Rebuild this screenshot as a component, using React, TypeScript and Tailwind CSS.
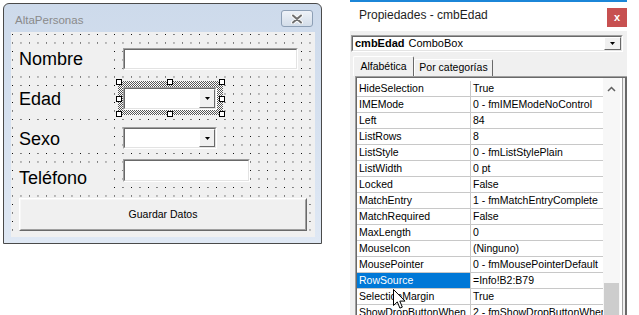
import type { JSX } from 'react'

type PropRow = [string, string]

const propRows: PropRow[] = [
  ['HideSelection', 'True'],
  ['IMEMode', '0 - fmIMEModeNoControl'],
  ['Left', '84'],
  ['ListRows', '8'],
  ['ListStyle', '0 - fmListStylePlain'],
  ['ListWidth', '0 pt'],
  ['Locked', 'False'],
  ['MatchEntry', '1 - fmMatchEntryComplete'],
  ['MatchRequired', 'False'],
  ['MaxLength', '0'],
  ['MouseIcon', '(Ninguno)'],
  ['MousePointer', '0 - fmMousePointerDefault'],
  ['RowSource', '=Info!B2:B79'],
  ['SelectionMargin', 'True'],
  ['ShowDropButtonWhen', '2 - fmShowDropButtonWhenAlways'],
]

const DropButton = ({ className = '' }: { className?: string }): JSX.Element => (
  <div
    className={`flex items-center justify-center border border-white border-r-[#696969] border-b-[#696969] bg-[#f0f0f0] ${className}`}
  >
    <svg width="5" height="3" viewBox="0 0 5 3">
      <path d="M0 0h5L2.5 3z" fill="#000" />
    </svg>
  </div>
)

const Sunken = ({
  className = '',
  children,
}: {
  className?: string
  children?: React.ReactNode
}): JSX.Element => (
  <div className={`flex border border-[#a0a0a0] border-r-white border-b-white ${className}`}>
    <div className="flex flex-1 border border-[#696969] border-r-[#e3e3e3] border-b-[#e3e3e3] bg-white">
      {children}
    </div>
  </div>
)

const FormLabel = ({ text, className = '' }: { text: string; className?: string }): JSX.Element => (
  <div
    className={`flex h-[26px] w-[96px] shrink-0 items-center bg-[#f0f0f0] pl-[4px] text-[18px] leading-[26px] text-black ${className}`}
  >
    {text}
  </div>
)

const Handle = ({ pos }: { pos: string }): JSX.Element => (
  <div className={`absolute h-[6px] w-[6px] border border-black bg-white ${pos}`} />
)

const UserForm = (): JSX.Element => (
  <div className="flex h-[241px] w-[319px] flex-col rounded-t-[6px] border border-[#4a4a4a] bg-linear-to-b from-[#cddaeb] to-[#dfe8f4]">
    <div className="flex h-[28px] shrink-0 items-start">
      <span className="mt-[9px] pl-[11px] text-[11.5px] leading-[14px] text-[#8a8a8a]">AltaPersonas</span>
      <div className="mt-[6px] mr-[8px] ml-auto flex h-[17px] w-[32px] items-center justify-center rounded-[3px] border border-[#8d9fb5] bg-linear-to-b from-[#eef2f8] to-[#d3dde9]">
        <svg width="14" height="10" viewBox="0 0 14 10">
          <path d="M3 1.5l8 7M11 1.5l-8 7" stroke="#fafafa" strokeWidth="4" strokeLinecap="round" />
          <path d="M3 1.5l8 7M11 1.5l-8 7" stroke="#707070" strokeWidth="2" strokeLinecap="round" />
        </svg>
      </div>
    </div>

    <div className="flex flex-1 pr-[6px] pb-[6px] pl-[7px]">
      <div className="relative h-[205px] flex-1 overflow-hidden bg-[#f0f0f0]">
        <svg className="absolute inset-0" width="100%" height="100%" shapeRendering="crispEdges">
          <defs>
            <pattern id="dots" x="1" y="2" width="8.5" height="8.5" patternUnits="userSpaceOnUse">
              <rect width="1" height="1" fill="#000" />
            </pattern>
          </defs>
          <rect width="100%" height="100%" fill="url(#dots)" />
        </svg>

        <div className="relative flex flex-col pt-[16px]">
          <div className="flex h-[22px] items-center pl-[4px]">
            <FormLabel text="Nombre" />
            <Sunken className="ml-[12px] h-[22px] w-[175px]" />
          </div>

          <div className="mt-[17px] flex h-[23px] items-center pl-[4px]">
            <FormLabel text="Edad" />
            <div className="relative ml-[12px]">
              <div className="absolute -top-[8px] -left-[7px] h-[38px] w-[109px]">
                <div className="absolute inset-[2px] bg-[repeating-conic-gradient(#555_0%_25%,#fff_0%_50%)] bg-[length:2px_2px]" />
                <Handle pos="top-0 left-0" />
                <Handle pos="top-0 left-[51px]" />
                <Handle pos="top-0 left-[103px]" />
                <Handle pos="top-[17px] left-0" />
                <Handle pos="top-[17px] left-[103px]" />
                <Handle pos="top-[32px] left-0" />
                <Handle pos="top-[32px] left-[51px]" />
                <Handle pos="top-[32px] left-[103px]" />
              </div>
              <Sunken className="relative h-[23px] w-[94px]">
                <div className="flex-1" />
                <DropButton className="w-[16px]" />
              </Sunken>
            </div>
          </div>

          <div className="mt-[17px] flex h-[22px] items-center pl-[4px]">
            <FormLabel text="Sexo" className="mt-[2px]" />
            <Sunken className="ml-[12px] h-[22px] w-[94px]">
              <div className="flex-1" />
              <DropButton className="w-[16px]" />
            </Sunken>
          </div>

          <div className="mt-[10px] flex h-[23px] items-start pl-[4px]">
            <FormLabel text="Teléfono" className="mt-[6px]" />
            <Sunken className="ml-[12px] h-[23px] w-[127px]" />
          </div>

          <div className="mt-[16px] ml-[8px] flex h-[33px] w-[288px] border border-white border-r-[#696969] border-b-[#696969]">
            <div className="flex flex-1 items-center justify-center border border-[#f7f7f7] border-r-[#a0a0a0] border-b-[#a0a0a0] bg-[#f0f0f0] text-[10.5px] text-black">
              Guardar Datos
            </div>
          </div>
        </div>
      </div>
    </div>
  </div>
)

const PropertiesPanel = (): JSX.Element => (
  <div className="ml-[28px] flex h-[315px] w-[277px] flex-col">
    <div className="h-[2px] shrink-0 bg-[#1b86d8]" />
    <div className="flex h-[29px] shrink-0 items-start bg-white">
      <span className="mt-[6px] pl-[9px] text-[12px] leading-[15px] text-[#1e1e1e]">Propiedades - cmbEdad</span>
      <div className="mt-[6px] ml-auto flex h-[19px] w-[20px] items-center justify-center bg-[#c75050] text-[11px] leading-none font-bold text-white">
        x
      </div>
    </div>

    <div className="flex flex-1 flex-col bg-[#f0f0f0]">
      <Sunken className="mt-[4px] ml-[1px] h-[17px] w-[272px]">
        <div className="flex flex-1 items-center pl-[2px] text-[11px] leading-none text-black">
          <span className="font-bold">cmbEdad</span>
          <span className="ml-[4px]">ComboBox</span>
        </div>
        <DropButton className="w-[17px]" />
      </Sunken>

      <div className="mt-[4px] flex h-[20px] items-end pl-[3px] text-[10.5px] text-black">
        <div className="flex h-[20px] w-[61px] items-center justify-center rounded-t-[2px] border-t border-l border-white border-r border-r-[#696969] bg-[#f0f0f0]">
          Alfabética
        </div>
        <div className="flex h-[17px] w-[79px] items-center justify-center rounded-t-[2px] border-t border-l border-white border-r border-r-[#696969]">
          Por categorías
        </div>
      </div>

      <div className="ml-[5px] flex flex-1 overflow-hidden border-t border-l border-[#a0a0a0]">
        <div className="flex flex-1 border-t border-l border-[#696969] bg-white">
          <div className="flex w-[246px] flex-col pt-[3px] text-[10.5px] text-black">
            {propRows.map(([name, value]) => {
              const selected = name === 'RowSource'
              return (
                <div key={name} className="flex h-[16px] shrink-0 border-b border-[#c8c8c8] leading-[15px]">
                  <div
                    className={`w-[114px] shrink-0 overflow-hidden border-r border-[#c8c8c8] pl-[2px] whitespace-nowrap ${
                      selected ? 'bg-[#0078d7] text-white' : ''
                    }`}
                  >
                    {name}
                  </div>
                  <div className="w-[132px] shrink-0 overflow-hidden pl-[2px] whitespace-nowrap">{value}</div>
                </div>
              )
            })}
          </div>

          <div className="flex w-[17px] flex-col bg-[#f7f7f7]">
            <svg className="block shrink-0" width="17" height="17" viewBox="0 0 17 17">
              <path d="M5 13l3.5-3.5L12 13" fill="none" stroke="#606060" strokeWidth="1.5" />
            </svg>
            <div className="mx-[1px] mt-[188px] h-[60px] shrink-0 bg-[#cdcdcd]" />
          </div>

          <div className="flex w-[7px] border-l-2 border-r-2 border-l-white border-r-[#696969] bg-[#f0f0f0]">
            <div className="h-full w-[1px] bg-[#a0a0a0]" />
          </div>
        </div>
      </div>
    </div>
  </div>
)

export default function App(): JSX.Element {
  return (
    <div className="relative flex h-[315px] w-[639px] overflow-hidden bg-white font-['Liberation_Sans',Arial,sans-serif]">
      <div className="pt-[3px] pl-[3px]">
        <UserForm />
      </div>
      <PropertiesPanel />

      <svg className="absolute top-[289px] left-[393px]" width="13" height="21" viewBox="0 0 13 21">
        <path
          d="M0.5 0.5v16l3.8-3.6 2.6 6.2 2.4-1-2.5-6h5.2z"
          fill="#fff"
          stroke="#000"
          strokeWidth="1"
          strokeLinejoin="miter"
        />
      </svg>
    </div>
  )
}
